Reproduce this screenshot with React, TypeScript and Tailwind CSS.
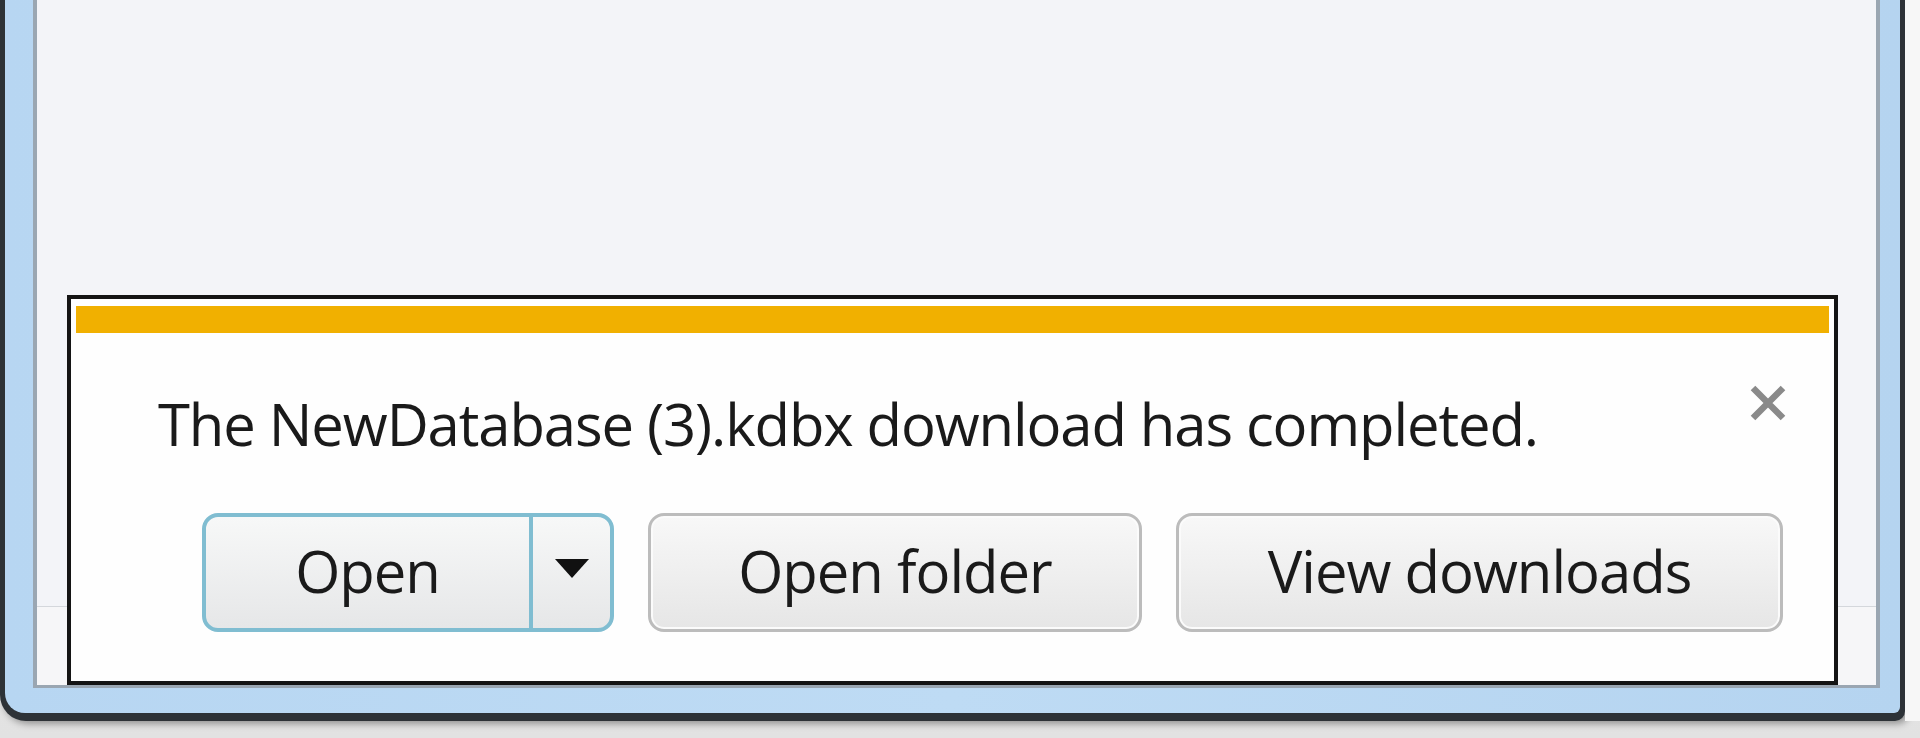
import React from "react";

const font = { fontFamily: '"Open Sans", "Noto Sans", sans-serif' };

function SplitButton() {
  return (
    <div className="flex h-[119px] w-[412px] overflow-hidden rounded-[16px] border-[4px] border-[#80bdd1] bg-gradient-to-b from-[#f7f8f8] to-[#e6e7e8]">
      <div className="flex w-[327px] items-center justify-center border-r-[4px] border-[#80bdd1] pb-[4px]">
        Open
      </div>
      <div className="flex flex-1 items-center justify-center pb-[8px]">
        <svg width="34" height="19" viewBox="0 0 34 19">
          <polygon points="0,0 34,0 17,19" fill="#111" />
        </svg>
      </div>
    </div>
  );
}

function Button({ label, width }: { label: string; width: string }) {
  return (
    <div
      className={`flex h-[119px] ${width} items-center justify-center rounded-[16px] border-[3px] border-[#bcbcbc] bg-gradient-to-b from-[#f8f8f8] to-[#e6e6e6] pb-[4px] shadow-[inset_0_0_0_2px_#fbfbfb]`}
    >
      {label}
    </div>
  );
}

function NotificationBar() {
  return (
    <div className="flex h-[390px] flex-1 flex-col border-[4px] border-[#141414] bg-[#fefefe] px-[5px] pt-[7px]">
      <div className="h-[27px] bg-[#f1b000]" />
      <div className="mt-[62px] flex items-start justify-between pl-[82px] pr-[41px]">
        <div className="text-[58px] leading-[58px] tracking-[-1.1px] text-[#1a1a1a]">
          The NewDatabase (3).kdbx download has completed.
        </div>
        <svg width="40" height="40" viewBox="0 0 40 40" className="-mt-[12px]">
          <path d="M5 5 L35 35 M35 5 L5 35" stroke="#8a8a8a" strokeWidth="6.5" />
        </svg>
      </div>
      <div className="mt-[60px] flex gap-[34px] pl-[126px] text-[58px] leading-[58px] tracking-[-1px] text-[#1a1a1a]">
        <SplitButton />
        <Button label="Open folder" width="w-[494px]" />
        <Button label="View downloads" width="w-[607px]" />
      </div>
    </div>
  );
}

export default function App() {
  return (
    <div className="flex h-[738px] w-[1920px] flex-col overflow-hidden bg-gradient-to-b from-[#f2f2f2] to-[#e2e2e2]" style={font}>
      <div className="flex">
        <div className="h-[721px] w-[1905px] rounded-bl-[26px] rounded-br-[10px] bg-[#2d3237] px-[5px] pb-[8px] shadow-[3px_3px_7px_rgba(0,0,0,0.35)]">
          <div className="h-full rounded-bl-[20px] rounded-br-[6px] bg-gradient-to-r from-[#b7d6f2] via-[#bedbf4] to-[#b5d4f0] pb-[25px] pl-[28px] pr-[20px]">
            <div className="flex h-full flex-col border-x-[4px] border-b-[3px] border-[#9aa6b2] bg-[#f3f4f8]">
              <div className="flex-1" />
              <div className="flex items-end">
                <div className="h-[79px] w-[30px] border-t border-[#d4d7dc] bg-[#f6f6f8]" />
                <NotificationBar />
                <div className="h-[79px] w-[38px] border-t border-[#d4d7dc] bg-[#f6f6f8]" />
              </div>
            </div>
          </div>
        </div>
        <div className="flex-1 bg-[#f7f7f7]" />
      </div>
    </div>
  );
}
